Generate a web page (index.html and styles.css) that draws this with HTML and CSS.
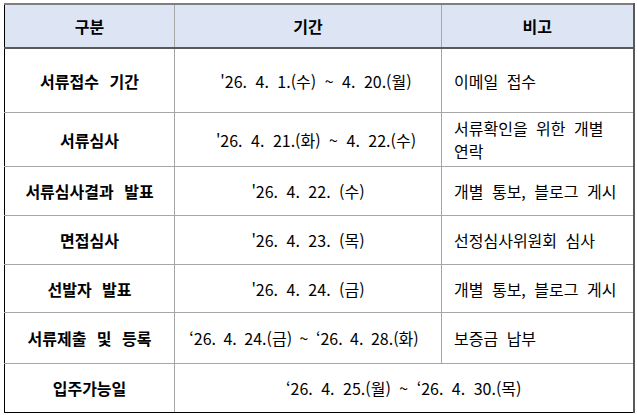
FILE: index.html
```html
<!DOCTYPE html>
<html lang="ko">
<head>
<meta charset="utf-8">
<link rel="stylesheet" href="styles.css">
</head>
<body>
<table class="sched">
  <colgroup>
    <col class="c1"><col class="c2"><col class="c3">
  </colgroup>
  <thead>
    <tr class="r-head">
      <th>구분</th><th>기간</th><th>비고</th>
    </tr>
  </thead>
  <tbody>
    <tr class="r1">
      <td class="name">서류접수 기간</td>
      <td class="date shift">'26. 4. 1.(수) ~ 4. 20.(월)</td>
      <td class="note">이메일 접수</td>
    </tr>
    <tr class="r2">
      <td class="name">서류심사</td>
      <td class="date shift">'26. 4. 21.(화) ~ 4. 22.(수)</td>
      <td class="note"><span class="ln">서류확인을 위한 개별</span><span class="ln">연락</span></td>
    </tr>
    <tr class="r3">
      <td class="name">서류심사결과 발표</td>
      <td class="date">'26. 4. 22. (수)</td>
      <td class="note">개별 통보, 블로그 게시</td>
    </tr>
    <tr class="r4">
      <td class="name">면접심사</td>
      <td class="date">'26. 4. 23. (목)</td>
      <td class="note">선정심사위원회 심사</td>
    </tr>
    <tr class="r5">
      <td class="name">선발자 발표</td>
      <td class="date">'26. 4. 24. (금)</td>
      <td class="note">개별 통보, 블로그 게시</td>
    </tr>
    <tr class="r6">
      <td class="name">서류제출 및 등록</td>
      <td class="date tight">‘26. 4. 24.(금) ~ ‘26. 4. 28.(화)</td>
      <td class="note">보증금 납부</td>
    </tr>
    <tr class="r7">
      <td class="name">입주가능일</td>
      <td class="date" colspan="2">‘26. 4. 25.(월) ~ ‘26. 4. 30.(목)</td>
    </tr>
  </tbody>
</table>
</body>
</html>
```
FILE: styles.css
```css
html, body {
  margin: 0;
  padding: 0;
  background: #ffffff;
}
body {
  padding: 3px 0 0 4px;
  font-family: "Noto Sans CJK KR", sans-serif;
  color: #000000;
}
.sched {
  border-collapse: collapse;
  width: 629px;
  table-layout: fixed;
  font-size: 16px;
  word-spacing: 4px;
}
.c1 { width: 170px; }
.c2 { width: 267px; }
.c3 { width: 192px; }
.sched th,
.sched td {
  border: 1px solid #a6a6a6;
  padding: 0;
  vertical-align: middle;
  line-height: 20px;
}
.sched th {
  background: #dde5f5;
  font-weight: bold;
  font-size: 16px;
  height: 42px;
  border-top: 2px solid #7f7f7f;
  border-bottom: 2px solid #595959;
  text-align: center;
}
.sched th:first-child,
.sched td:first-child {
  border-left: 1px solid #000000;
}
.sched th:last-child,
.sched td:last-child {
  border-right: 2px solid #595959;
}
.sched tr:last-child td {
  border-bottom: 1px solid #000000;
}
.name {
  text-align: center;
  font-weight: bold;
  font-size: 16px;
  word-spacing: 6px;
}
.date {
  text-align: center;
}
.date.shift {
  padding-left: 16px;
}
.date.tight {
  word-spacing: 3px;
  padding-right: 8px;
}
.note {
  text-align: left;
  padding-left: 12px !important;
}
.ln {
  display: block;
  line-height: 23px;
}
.r1 td { height: 63px; }
.r2 td { height: 53px; }
.r3 td { height: 48px; }
.r4 td { height: 48px; }
.r5 td { height: 47px; }
.r6 td { height: 50px; }
.r7 td { height: 48px; }
```
